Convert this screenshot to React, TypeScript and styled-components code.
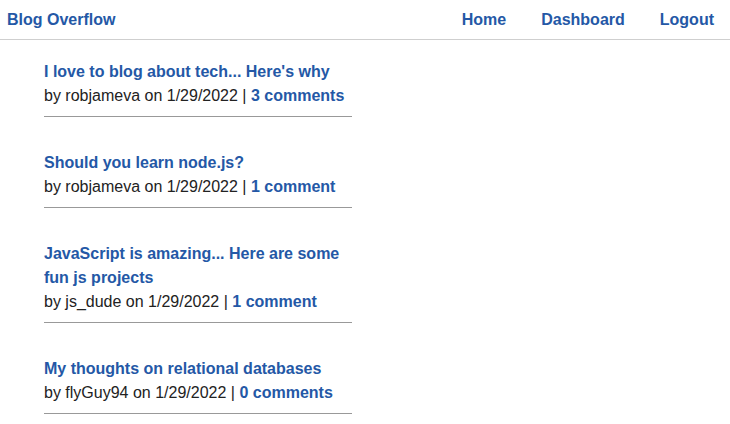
import React from "react";
import styled, { createGlobalStyle } from "styled-components";

const Global = createGlobalStyle`
  html, body { margin: 0; padding: 0; background: #fff; }
  body { font-family: "Liberation Sans", Arial, Helvetica, sans-serif; font-size: 16px; color: #222; }
  * { box-sizing: border-box; }
`;

const Header = styled.header`
  display: flex;
  align-items: center;
  justify-content: space-between;
  height: 40px;
  padding: 1px 16px 0 7px;
  border-bottom: 1px solid #cfcfcf;
`;

const Brand = styled.a`
  color: #2458a6;
  font-weight: bold;
  font-size: 16px;
  text-decoration: none;
`;

const Nav = styled.nav`
  display: flex;
  gap: 35px;
`;

const NavLink = styled.a`
  color: #2458a6;
  font-weight: bold;
  font-size: 16px;
  text-decoration: none;
`;

const Main = styled.main`
  display: flex;
  flex-direction: column;
  gap: 34px;
  width: 308px;
  margin: 20px 0 0 44px;
`;

const Post = styled.article`
  display: flex;
  flex-direction: column;
  line-height: 24px;
  padding-bottom: 8px;
  border-bottom: 1px solid #999;
`;

const Title = styled.a`
  color: #2458a6;
  font-weight: bold;
  text-decoration: none;
`;

const Meta = styled.div`
  color: #222;
`;

const CommentLink = styled.a`
  color: #2458a6;
  font-weight: bold;
  text-decoration: none;
`;

const posts = [
  { title: "I love to blog about tech... Here's why", user: "robjameva", comments: "3 comments" },
  { title: "Should you learn node.js?", user: "robjameva", comments: "1 comment" },
  { title: "JavaScript is amazing... Here are some fun js projects", user: "js_dude", comments: "1 comment" },
  { title: "My thoughts on relational databases", user: "flyGuy94", comments: "0 comments" },
];

export default function App() {
  return (
    <>
      <Global />
      <Header>
        <Brand href="#">Blog Overflow</Brand>
        <Nav>
          <NavLink href="#">Home</NavLink>
          <NavLink href="#">Dashboard</NavLink>
          <NavLink href="#">Logout</NavLink>
        </Nav>
      </Header>
      <Main>
        {posts.map((p) => (
          <Post key={p.title}>
            <Title href="#">{p.title}</Title>
            <Meta>
              by {p.user} on 1/29/2022 | <CommentLink href="#">{p.comments}</CommentLink>
            </Meta>
          </Post>
        ))}
      </Main>
    </>
  );
}
